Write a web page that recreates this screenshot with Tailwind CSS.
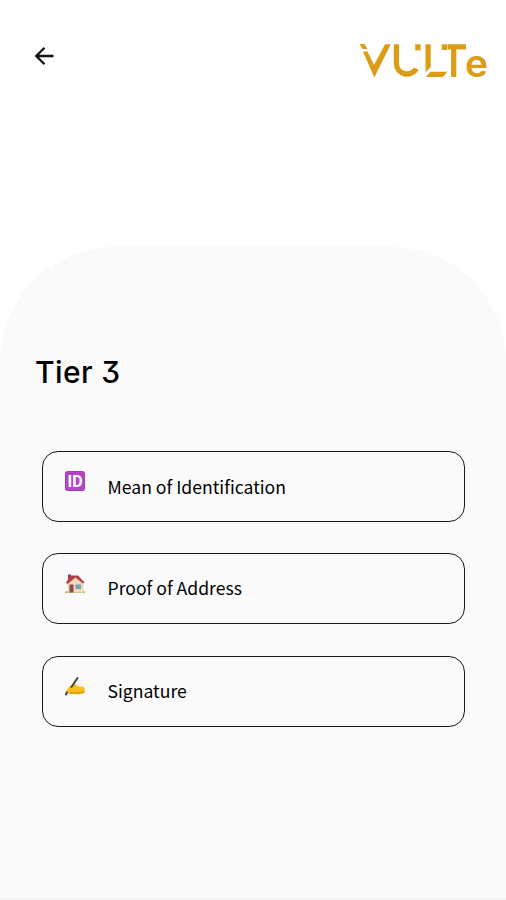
<!DOCTYPE html>
<html lang="en">
<head>
    <meta charset="UTF-8">
    <meta name="viewport" content="width=device-width, initial-scale=1.0">
    <title>Tier 3</title>
    <script src="https://cdn.jsdelivr.net/npm/@tailwindcss/browser@4"></script>
</head>
<body class="bg-white min-h-screen flex flex-col text-black font-['Noto_Sans_CJK_SC',sans-serif]">
    <!-- Header -->
    <header class="h-[247px] flex justify-between items-start pl-[34px] pr-[14px] pt-[30px]">
        <button class="mt-4" aria-label="Back">
            <svg class="block" width="21" height="20" viewBox="0 0 21 20" fill="none" stroke="#111" stroke-width="2.300">
                <path d="M19.5 10H2.500M10.500 1.800L2.300 10l8.200 8.200" />
            </svg>
        </button>
        <svg class="block" width="134" height="64" viewBox="358 30 134 64" fill="#dc9c16" role="img" aria-label="VULTe">
            <path d="M359.500 44h5l3 5h-5z" />
            <path d="M363 51.500h4.500l6.500 13.500 11-20.800h5.800L374.300 77.500z" />
            <path d="M393.800 44.300h5.200v19.700a8 8 0 0 0 14.700 3.600l5.100 2.200a13.300 13.300 0 0 1-25-5.800z" />
            <path d="M415.200 44.300h5.500v6h-5.500z" />
            <path d="M425.500 44.300h5.200v23l-5.200 5z" />
            <path d="M430.500 71.800h16.700l-4 5.200h-17.400z" />
            <path d="M441.700 44.300h5.300v5.700h-5.300z" />
            <path d="M447.500 44.300h18.500v5.200h-9.700v27.500h-5.200V49.500h-3.600z" />
            <text x="465" y="76.500" font-family="Inter, sans-serif" font-weight="600" font-size="39">e</text>
        </svg>
    </header>

    <!-- Content sheet -->
    <main class="flex-1 bg-[#fafafa] rounded-t-[114px] px-[35px] pt-[104px]">
        <h1 class="h-[42px] flex items-center text-[30px] font-medium tracking-[0.4px] font-['Inter',sans-serif] [font-feature-settings:'cv09']">Tier 3</h1>

        <div class="flex flex-col gap-[31.500px] mt-[57.500px] pl-[6.500px] pr-[6px]">
            <button class="h-[71px] flex items-center border border-[#1a1a1a] rounded-2xl pl-[21px] text-left">
                <svg class="block mb-[10px]" width="22" height="22" viewBox="0 0 22 22">
                    <rect x="1" y="1" width="20" height="20" rx="3" fill="#b446c6" />
                    <rect x="1.500" y="1.500" width="19" height="19" rx="2.500" fill="none" stroke="#8c35a8" stroke-opacity=".5" />
                    <text x="11" y="16.500" text-anchor="middle" fill="#fff" font-family="Roboto, sans-serif" font-weight="700" font-size="16">ID</text>
                </svg>
                <span class="ml-[22px] mt-[2px] text-[17.600px]">Mean of Identification</span>
            </button>
            <button class="h-[71px] flex items-center border border-[#1a1a1a] rounded-2xl pl-[21px] text-left">
                <svg class="block mb-[9px]" width="22" height="22" viewBox="0 0 22 22">
                    <path d="M1 18.500c3-1.500 17-1.500 20 0v1.500H1z" fill="#a9b77c" />
                    <path d="M4 1.500h3v5H4z" fill="#a83c4a" />
                    <path d="M3.500 9L12 3l7.500 7v9.500h-16z" fill="#f3d9b5" />
                    <path d="M5.500 11.500h4v8h-4z" fill="#8f4b48" />
                    <path d="M11.500 11.500h5.500v4.500h-5.500z" fill="#6fa6b9" />
                    <path d="M7 2.500h7l6.500 7-1.500 1L11.500 4.500 3.500 11 2 9.500z" fill="#b33b49" />
                </svg>
                <span class="ml-[22px] text-[17.600px]">Proof of Address</span>
            </button>
            <button class="h-[71px] flex items-center border border-[#1a1a1a] rounded-2xl pl-[21px] text-left">
                <svg class="block mb-[8px]" width="22" height="22" viewBox="0 0 22 22">
                    <path d="M1.500 15.500c2-2 3-5 6-6.500l4-.8c2-.2 2.500 1 1.500 2l6 .5c2 .5 2.500 5 1 6.300-4 1.500-12 1.800-15 .5z" fill="#fbbf24" />
                    <path d="M5 17.500c4 1 11 .5 15-.5l.5-2c-4 1.500-11 1.500-14 .5z" fill="#e09a12" />
                    <path d="M13.500 2L7.500 11M3 16.500L2 18.500" stroke="#404347" stroke-width="2" stroke-linecap="round" />
                </svg>
                <span class="ml-[22px] text-[17.600px]">Signature</span>
            </button>
        </div>
    </main>
    <footer class="h-1 bg-[#f7f7f7] border-t border-white"></footer>
</body>
</html>
